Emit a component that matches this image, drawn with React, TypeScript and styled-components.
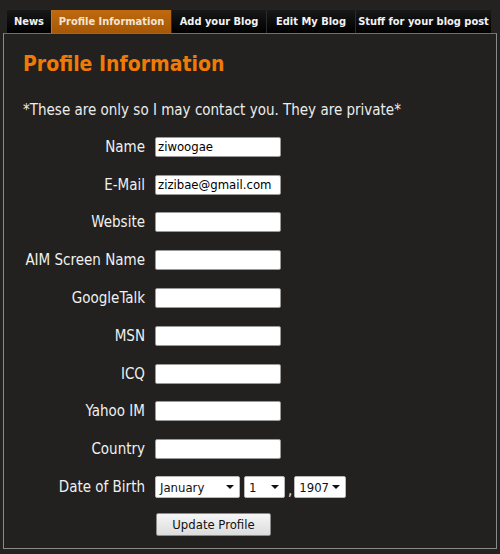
import * as React from 'react'
import styled, {createGlobalStyle} from 'styled-components'

const Global = createGlobalStyle`
  html, body {
    margin: 0;
    padding: 0;
    background: #242220;
  }
  body {
    font-family: "DejaVu Sans Condensed", "DejaVu Sans", sans-serif;
    color: #ececec;
  }
`

const tabs = [
  {text: 'News', width: 44},
  {text: 'Profile Information', width: 120},
  {text: 'Add your Blog', width: 95},
  {text: 'Edit My Blog', width: 89},
  {text: 'Stuff for your blog post', width: 136},
]

const fields = [
  {label: 'Name', value: 'ziwoogae'},
  {label: 'E-Mail', value: 'zizibae@gmail.com'},
  {label: 'Website', value: ''},
  {label: 'AIM Screen Name', value: ''},
  {label: 'GoogleTalk', value: ''},
  {label: 'MSN', value: ''},
  {label: 'ICQ', value: ''},
  {label: 'Yahoo IM', value: ''},
  {label: 'Country', value: ''},
]

const Page = styled.div`
  width: 500px;
  height: 554px;
  padding-top: 10px;
  box-sizing: border-box;
`

const TabBar = styled.div`
  display: flex;
  padding-left: 7px;
  height: 23px;
`

const Tab = styled.div<{$active?: boolean; $w: number}>`
  display: flex;
  align-items: center;
  justify-content: center;
  width: ${p => p.$w}px;
  box-sizing: border-box;
  font-size: 11px;
  font-weight: bold;
  color: ${p => (p.$active ? '#f4e6d4' : '#f2f2f2')};
  background: ${p =>
    p.$active
      ? 'linear-gradient(#c0690f, #a65806)'
      : 'linear-gradient(#181818, #000000)'};
  border-left: 1px solid ${p => (p.$active ? '#c87418' : '#2a2a2a')};
  white-space: nowrap;
  &:first-child {
    border-left: none;
  }
`

const Panel = styled.div`
  margin: 0 3px 0 3px;
  height: 516px;
  border: 1px solid #8a8a8a;
  border-top-color: #707070;
  box-sizing: border-box;
  background: #22211f;
`

const Heading = styled.h1`
  margin: 0;
  padding: 16px 0 0 19px;
  font-size: 21px;
  font-weight: bold;
  color: #f07a06;
  line-height: 28px;
`

const Note = styled.p`
  margin: 0;
  padding: 22px 0 0 19px;
  font-size: 15px;
  line-height: 20px;
`

const Form = styled.div`
  display: grid;
  grid-template-columns: 141px auto;
  column-gap: 10px;
  grid-auto-rows: 37.8px;
  align-items: center;
  padding-top: 8px;
`

const Label = styled.label`
  text-align: right;
  font-size: 15px;
  color: #f0f0f0;
`

const TextInput = styled.input`
  width: 126px;
  height: 20px;
  box-sizing: border-box;
  border: 1px solid #9a9a9a;
  border-radius: 2px;
  background: #ffffff;
  padding: 0 2px;
  font-family: "DejaVu Sans Condensed", "DejaVu Sans", sans-serif;
  font-size: 13px;
  color: #000;
  outline: none;
`

const SelectRow = styled.div`
  display: flex;
  align-items: center;
`

const Select = styled.div<{$w: number}>`
  width: ${p => p.$w}px;
  height: 22px;
  box-sizing: border-box;
  display: flex;
  align-items: center;
  justify-content: space-between;
  padding: 0 5px 0 4px;
  background: #ffffff;
  border: 1px solid #b8b8b8;
  border-radius: 2px;
  color: #111;
  font-size: 13px;
  margin-right: 4px;
`

const Arrow = styled.span`
  width: 0;
  height: 0;
  border-left: 4px solid transparent;
  border-right: 4px solid transparent;
  border-top: 4px solid #111;
`

const Comma = styled.span`
  color: #ececec;
  font-size: 15px;
  margin: 6px 2px 0 -1px;
`

const Button = styled.button`
  grid-column: 2;
  justify-self: start;
  margin-left: 1px;
  width: 115px;
  height: 23px;
  border: 1px solid #8c8c8c;
  border-radius: 2px;
  background: linear-gradient(#f6f6f6, #dcdcdc);
  font-family: "DejaVu Sans Condensed", "DejaVu Sans", sans-serif;
  font-size: 13px;
  color: #111;
  padding: 0;
`

export default function App() {
  return (
    <Page>
      <Global />
      <TabBar>
        {tabs.map(t => (
          <Tab key={t.text} $w={t.width} $active={t.text === 'Profile Information'}>
            {t.text}
          </Tab>
        ))}
      </TabBar>
      <Panel>
        <Heading>Profile Information</Heading>
        <Note>*These are only so I may contact you. They are private*</Note>
        <Form>
          {fields.map(f => (
            <React.Fragment key={f.label}>
              <Label>{f.label}</Label>
              <TextInput defaultValue={f.value} />
            </React.Fragment>
          ))}
          <Label>Date of Birth</Label>
          <SelectRow>
            <Select $w={85}>
              January <Arrow />
            </Select>
            <Select $w={41}>
              1 <Arrow />
            </Select>
            <Comma>,</Comma>
            <Select $w={52}>
              1907 <Arrow />
            </Select>
          </SelectRow>
          <span />
          <Button>Update Profile</Button>
        </Form>
      </Panel>
    </Page>
  )
}
